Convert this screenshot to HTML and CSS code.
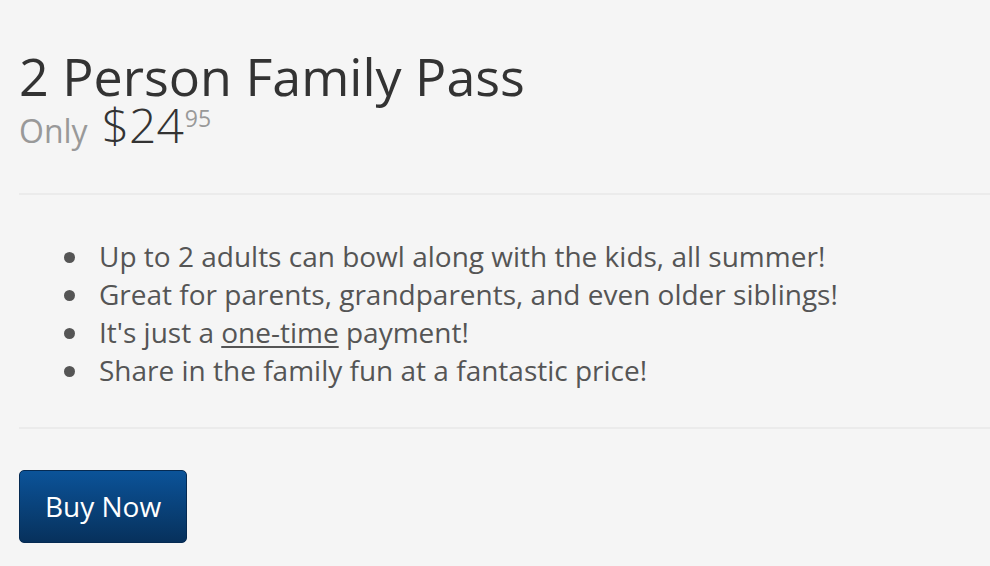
FILE: index.html
```html
<!DOCTYPE html>
<html>
<head>
<meta charset="utf-8">
<link rel="stylesheet" href="styles.css">
</head>
<body>
<div class="card">
  <header class="head">
    <h1 class="title">2 Person Family Pass</h1>
    <div class="price"><span class="only">Only</span><span class="amount">$24</span><sup class="cents">95</sup></div>
  </header>
  <ul class="features">
    <li>Up to 2 adults can bowl along with the kids, all summer!</li>
    <li>Great for parents, grandparents, and even older siblings!</li>
    <li>It's just a <u>one-time</u> payment!</li>
    <li>Share in the family fun at a fantastic price!</li>
  </ul>
  <div class="actions">
    <a class="buy" href="#">Buy Now</a>
  </div>
</div>
</body>
</html>
```

FILE: styles.css
```css
html, body {
  margin: 0;
  padding: 0;
  background: #f5f5f5;
}
body {
  font-family: "Open Sans", "Liberation Sans", sans-serif;
}
.card {
  padding-left: 19px;
  padding-top: 47px;
}
.head {
  border-bottom: 2px solid #ebebeb;
  padding-bottom: 42px;
}
.title {
  margin: 0;
  font-size: 52px;
  font-weight: 400;
  line-height: 58px;
  color: #333;
}
.price {
  display: flex;
  align-items: baseline;
  line-height: 40px;
  color: #333;
}
.only {
  font-size: 32px;
  color: #999;
  margin-right: 14px;
}
.amount {
  font-size: 48px;
  font-weight: 300;
  color: #333;
}
.cents {
  font-size: 23px;
  line-height: 1;
  color: #999;
  align-self: flex-start;
  margin-top: 2px;
  margin-left: 1px;
}
.features {
  margin: 0;
  padding: 42px 0 38px 45px;
  border-bottom: 2px solid #ebebeb;
  list-style: none;
  font-size: 28px;
  line-height: 38px;
  color: #555;
}
.features li::before {
  content: "";
  display: inline-block;
  width: 11px;
  height: 11px;
  border-radius: 50%;
  background: #555;
  margin-right: 24px;
  vertical-align: middle;
  position: relative;
  top: -2px;
}
.features u {
  text-decoration-thickness: 2px;
  text-underline-offset: 3px;
}
.actions {
  padding-top: 41px;
}
.buy {
  display: inline-block;
  width: 166px;
  height: 71px;
  line-height: 71px;
  text-align: center;
  border: 1px solid #052a52;
  border-radius: 5px;
  background: linear-gradient(#0b5399, #07315c);
  color: #fff;
  text-decoration: none;
  font-size: 28px;
}
```
